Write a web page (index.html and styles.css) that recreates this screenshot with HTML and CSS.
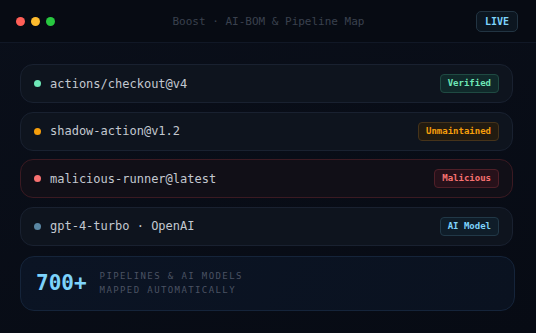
FILE: index.html
```html
<!DOCTYPE html>
<html lang="en">
<head>
  <meta charset="UTF-8">
  <title>Boost AI-BOM</title>
  <link rel="stylesheet" href="styles.css">
</head>
<body>

  <div class="titlebar">
    <div class="dots">
      <span class="dot red"></span>
      <span class="dot yellow"></span>
      <span class="dot green"></span>
    </div>
    <div class="title">Boost · AI-BOM &amp; Pipeline Map</div>
    <div class="live">LIVE</div>
  </div>

  <div class="content">
    <div class="row">
      <span class="status ok"></span>
      <span class="name">actions/checkout@v4</span>
      <span class="badge ok">Verified</span>
    </div>
    <div class="row">
      <span class="status warn"></span>
      <span class="name">shadow-action@v1.2</span>
      <span class="badge warn">Unmaintained</span>
    </div>
    <div class="row danger">
      <span class="status bad"></span>
      <span class="name">malicious-runner@latest</span>
      <span class="badge bad">Malicious</span>
    </div>
    <div class="row">
      <span class="status ai"></span>
      <span class="name">gpt-4-turbo · OpenAI</span>
      <span class="badge ai">AI Model</span>
    </div>

    <div class="summary">
      <div class="big">700+</div>
      <div class="label">Pipelines &amp; AI models<br>mapped automatically</div>
    </div>
  </div>

</body>
</html>
```

FILE: styles.css
```css
body {
  margin: 0;
  width: 536px;
  height: 333px;
  overflow: hidden;
  font-family: "DejaVu Sans Mono", "Liberation Mono", monospace;
  background: linear-gradient(160deg, #0a0f1a, #070b14);
  color: #c9ced6;
}
.titlebar {
  height: 43px;
  box-sizing: border-box;
  border-bottom: 1px solid #111826;
  background: #070b13;
  display: flex;
  align-items: center;
  padding: 0 18px 0 16px;
}
.dots {
  display: flex;
  gap: 6px;
}
.dot {
  width: 9px;
  height: 9px;
  border-radius: 50%;
}
.dot.red { background: #ff5f57; }
.dot.yellow { background: #febc2e; }
.dot.green { background: #28c840; }
.title {
  flex: 1;
  text-align: center;
  font-size: 11px;
  color: #3a414e;
  padding-left: 6px;
}
.live {
  font-size: 10px;
  font-weight: bold;
  color: #7dd3fc;
  border: 1px solid #223442;
  background: #0c1620;
  border-radius: 5px;
  padding: 0 8px;
  height: 21px;
  box-sizing: border-box;
  line-height: 19px;
}
.content {
  padding: 21px 23px 0 20px;
  display: flex;
  flex-direction: column;
  gap: 8.6px;
}
.row {
  height: 39px;
  box-sizing: border-box;
  display: flex;
  align-items: center;
  padding: 0 13px;
  background: #0e141e;
  border: 1px solid #192130;
  border-radius: 13px;
}
.row.danger {
  background: #110f17;
  border-color: #3b1a22;
}
.status {
  width: 7px;
  height: 7px;
  border-radius: 50%;
  margin-right: 10px;
}
.status.ok { background: #6ee7b7; }
.status.warn { background: #f59e0b; }
.status.bad { background: #f87171; }
.status.ai { background: #5a87a3; }
.name {
  flex: 1;
  font-size: 12px;
  color: #c3c8d0;
  margin-left: -1px;
}
.badge {
  font-size: 9px;
  font-weight: bold;
  height: 19px;
  line-height: 17px;
  box-sizing: border-box;
  padding: 0 7px;
  border-radius: 4px;
  border: 1px solid;
}
.badge.ok { color: #6ee7b7; background: #10292a; border-color: #1f4a42; }
.badge.warn { color: #f59e0b; background: #221b10; border-color: #45331a; }
.badge.bad { color: #f87171; background: #27111a; border-color: #4f1f28; }
.badge.ai { color: #7dd3fc; background: #0f1d29; border-color: #213847; }
.summary {
  margin-top: 1.5px;
  height: 55px;
  box-sizing: border-box;
  margin-right: -2px;
  display: flex;
  align-items: center;
  padding: 0 15px;
  gap: 13px;
  background: linear-gradient(120deg, #0b1424, #0a1220);
  border: 1px solid #15243a;
  border-radius: 14px;
}
.big {
  font-size: 21px;
  font-weight: bold;
  color: #7dd3fc;
}
.label {
  font-size: 9px;
  letter-spacing: 1.4px;
  line-height: 14px;
  text-transform: uppercase;
  color: #4a5262;
}
```
